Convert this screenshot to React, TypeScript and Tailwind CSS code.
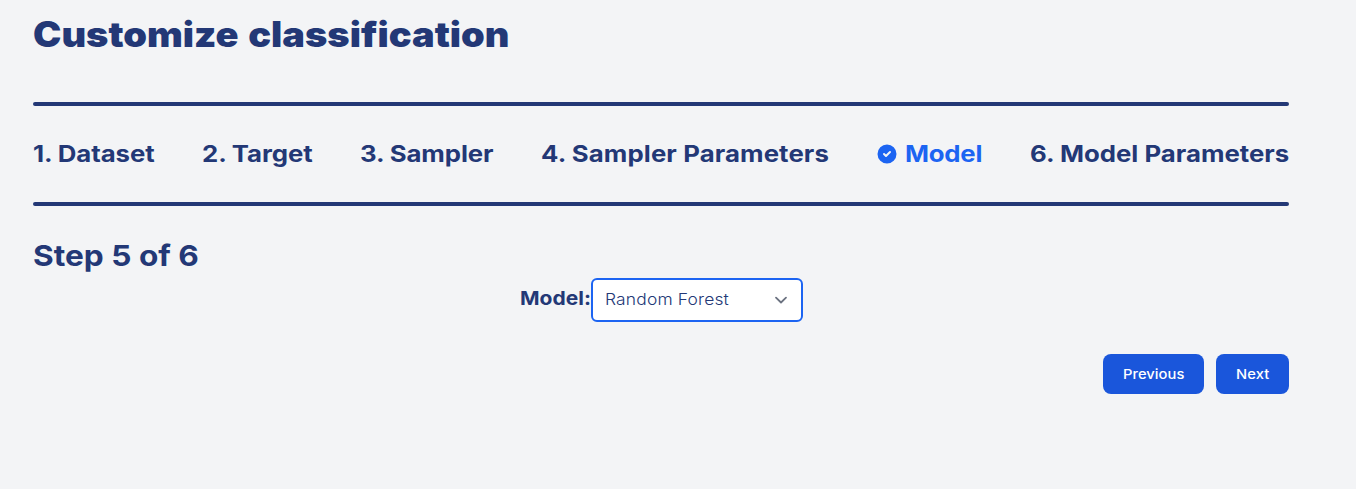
const steps = [
  { label: "1. Dataset", box: "w-[121px]", tracking: "tracking-[-0.06px]" },
  { label: "2. Target", box: "w-[110px]", tracking: "tracking-[-0.08px]" },
  { label: "3. Sampler", box: "w-[133px]", tracking: "tracking-[-0.08px]" },
  { label: "4. Sampler Parameters", box: "w-[288px]", tracking: "tracking-[0.1px]" },
  { label: "Model", box: "w-[105px]", tracking: "tracking-[-0.2px]", active: true },
  { label: "6. Model Parameters", box: "w-[259px]", tracking: "tracking-[0.01px]" },
];

function CheckCircle() {
  return (
    <svg className="mr-2 size-5 shrink-0" viewBox="0 0 20 20" fill="currentColor" aria-hidden="true">
      <path d="M10 .5a9.5 9.5 0 1 0 9.5 9.5A9.51 9.51 0 0 0 10 .5Zm3.707 8.207-4 4a1 1 0 0 1-1.414 0l-2-2a1 1 0 0 1 1.414-1.414L9 10.586l3.293-3.293a1 1 0 0 1 1.414 1.414Z" />
    </svg>
  );
}

export default function App() {
  return (
    <main className="min-h-screen bg-[#f3f4f6] pt-3.5 pr-[67px] pl-[33px] font-['Inter',sans-serif] text-[#233876]">
      <h1 className="h-10 w-[476px] origin-left scale-x-[1.085] text-[35px] leading-10 font-black [word-spacing:2px] whitespace-nowrap">
        Customize classification
      </h1>
      <hr className="mt-12 h-1 rounded-sm border-0 bg-[#233876]" />
      <ol className="flex h-24 items-center justify-between text-[23px] leading-8 font-[660] whitespace-nowrap">
        {steps.map((s) => (
          <li key={s.label} className={`flex items-center ${s.box} ${s.active ? "text-[#1c64f2]" : ""}`}>
            {s.active && <CheckCircle />}
            <span className={`origin-left scale-x-[1.12] ${s.tracking}`}>{s.label}</span>
          </li>
        ))}
      </ol>
      <hr className="h-1 rounded-sm border-0 bg-[#233876]" />
      <h2 className="mt-8 h-9 w-[166px] origin-left scale-x-[1.09] text-[29px] leading-9 font-[660] whitespace-nowrap">
        Step 5 of 6
      </h2>
      <div className="mt-1 flex pl-[487px]">
        <label htmlFor="model" className="mt-1.5 w-[71px] text-[19.3px] leading-7 font-bold whitespace-nowrap">
          <span className="inline-block origin-left scale-x-[1.09]">Model:</span>
        </label>
        <button
          id="model"
          className="flex h-11 w-[212px] items-center justify-between rounded-md border-2 border-[#1c64f2] bg-white pr-[13px] pl-3 text-[15.4px] font-light whitespace-nowrap"
        >
          <span className="origin-left scale-x-[1.13] tracking-[0.16px]">Random Forest</span>
          <svg className="h-2 w-3.5" viewBox="0 0 14 8" fill="none" stroke="#6b7280" strokeWidth="1.8" strokeLinecap="round" strokeLinejoin="round" aria-hidden="true">
            <path d="m2 1.7 5 4.8 5-4.8" />
          </svg>
        </button>
      </div>
      <div className="mt-8 flex justify-end gap-3 text-[13.5px] leading-5 font-medium whitespace-nowrap text-white">
        <button className="h-10 w-[101px] rounded-lg bg-[#1a56db] pl-5 text-left">
          <span className="inline-block origin-left scale-x-[1.09] tracking-[0.04px]">Previous</span>
        </button>
        <button className="h-10 w-[73px] rounded-lg bg-[#1a56db] pl-5 text-left">
          <span className="inline-block origin-left scale-x-[1.09] tracking-[0.12px]">Next</span>
        </button>
      </div>
    </main>
  );
}
